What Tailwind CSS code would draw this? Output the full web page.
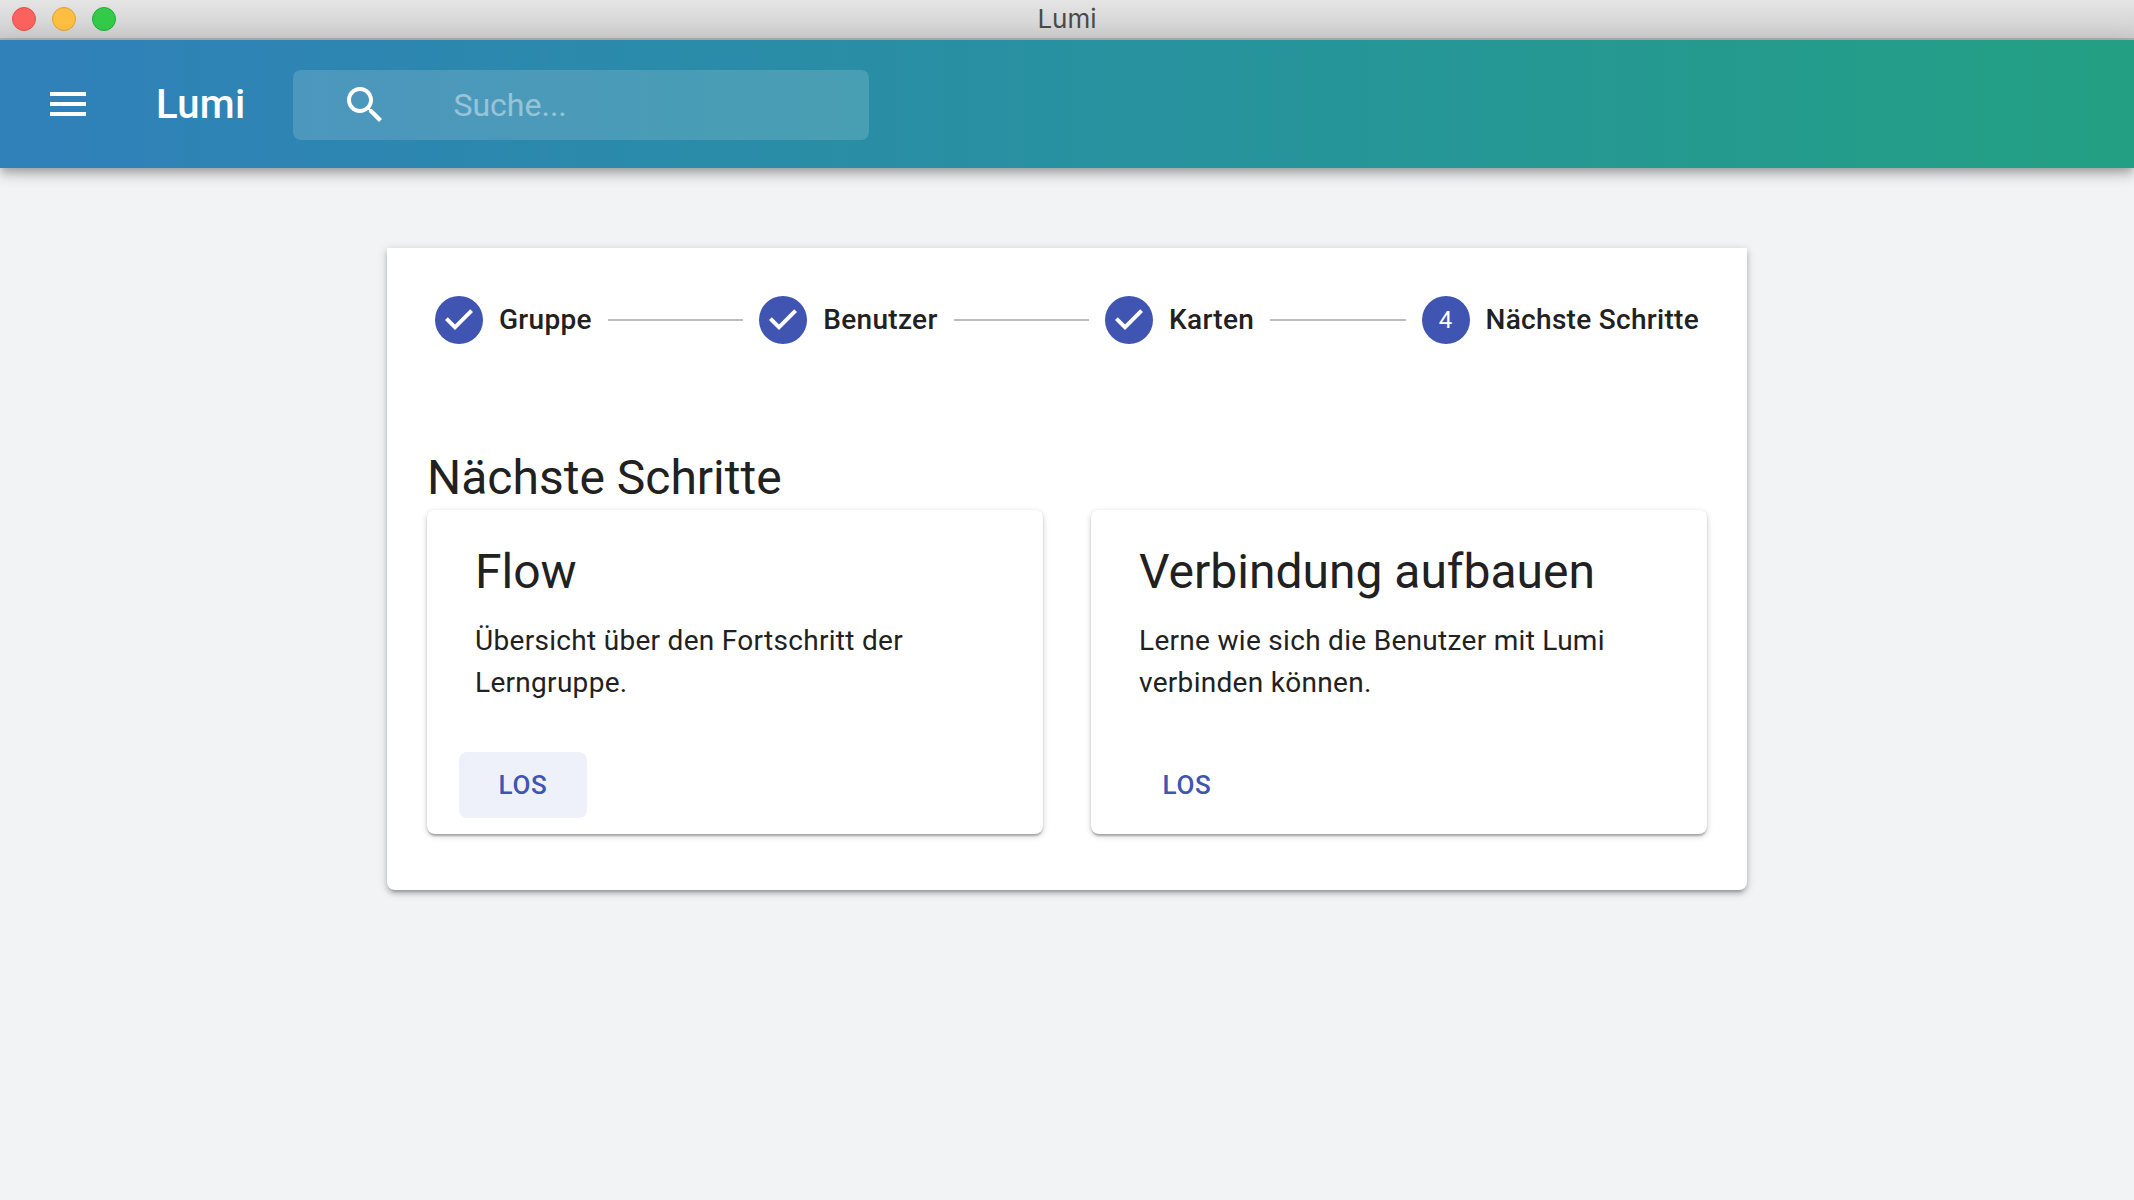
<!DOCTYPE html>
<html lang="de">
<head>
<meta charset="utf-8">
<title>Lumi</title>
<script src="https://cdn.jsdelivr.net/npm/@tailwindcss/browser@4"></script>
</head>
<body class="min-h-screen bg-[#f1f3f5] font-[Roboto,sans-serif] text-[#212121]">
  <div class="grid h-10 grid-cols-3 items-center border-b-2 border-[#b2b0b2] bg-linear-to-b from-[#e5e5e5] to-[#cecece] px-3">
    <div class="flex gap-4">
      <span class="size-6 rounded-full border border-[#e2504c] bg-[#fc625d]"></span>
      <span class="size-6 rounded-full border border-[#dfa03a] bg-[#fdbe41]"></span>
      <span class="size-6 rounded-full border border-[#24ab37] bg-[#34ca49]"></span>
    </div>
    <span class="text-center font-[Inter,sans-serif] text-[26px] leading-8 text-[#4a4a4a]">Lumi</span>
  </div>

  <header class="relative flex h-32 items-center bg-linear-to-r from-[#3080ba] to-[#23a083] pl-11 text-white shadow-[0_4px_8px_-2px_rgba(0,0,0,0.2),0_8px_10px_0_rgba(0,0,0,0.14),0_2px_20px_0_rgba(0,0,0,0.12)]">
    <button type="button" aria-label="Menü" class="size-12">
      <svg viewBox="0 0 24 24" class="size-12" fill="currentColor"><path d="M3 18h18v-2H3v2zm0-5h18v-2H3v2zm0-7v2h18V6H3z"/></svg>
    </button>
    <div class="flex items-center gap-12 pt-0.5 pl-16">
      <h1 class="text-[40px] leading-16 font-medium tracking-[0.0075em]">Lumi</h1>
      <label class="flex h-[70px] w-[576px] items-center rounded-lg bg-white/15 pl-12">
        <svg viewBox="0 0 24 24" class="size-12 shrink-0" fill="currentColor" aria-hidden="true"><path d="M15.5 14h-.79l-.28-.27C15.41 12.59 16 11.11 16 9.5 16 5.91 13.09 3 9.5 3S3 5.91 3 9.5 5.91 16 9.5 16c1.61 0 3.09-.59 4.23-1.57l.27.28v.79l5 4.99L20.49 19l-4.99-5zm-6 0C7.01 14 5 11.99 5 9.5S7.01 5 9.5 5 14 7.01 14 9.5 11.99 14 9.5 14z"/></svg>
        <input type="text" aria-label="Suche" placeholder="Suche..." class="ml-16 w-full min-w-0 bg-transparent text-[32px] leading-10 outline-none placeholder:text-white/42">
      </label>
    </div>
  </header>

  <main class="mx-auto mt-20 max-w-[1360px] rounded-b-lg bg-white pb-14 shadow-[0_2px_10px_0_rgba(0,0,0,0.2),0_4px_4px_0_rgba(0,0,0,0.14),0_6px_2px_-4px_rgba(0,0,0,0.12)]">
    <ol class="flex items-center gap-4 p-12 text-[28px] leading-12 font-medium tracking-[0.01071em]">
      <li class="flex items-center gap-4">
        <svg viewBox="0 0 24 24" class="size-12" aria-hidden="true"><circle cx="12" cy="12" r="12" fill="#4054b2"/><path fill="#fff" d="M10 17l-5-5 1.400-1.400 3.600 3.600 7.600-7.600L19 8l-9 9z"/></svg>
        <span>Gruppe</span>
      </li>
      <li role="presentation" class="h-[2px] flex-1 bg-[#bdbdbd]"></li>
      <li class="flex items-center gap-4">
        <svg viewBox="0 0 24 24" class="size-12" aria-hidden="true"><circle cx="12" cy="12" r="12" fill="#4054b2"/><path fill="#fff" d="M10 17l-5-5 1.400-1.400 3.600 3.600 7.600-7.600L19 8l-9 9z"/></svg>
        <span>Benutzer</span>
      </li>
      <li role="presentation" class="h-[2px] flex-1 bg-[#bdbdbd]"></li>
      <li class="flex items-center gap-4">
        <svg viewBox="0 0 24 24" class="size-12" aria-hidden="true"><circle cx="12" cy="12" r="12" fill="#4054b2"/><path fill="#fff" d="M10 17l-5-5 1.400-1.400 3.600 3.600 7.600-7.600L19 8l-9 9z"/></svg>
        <span>Karten</span>
      </li>
      <li role="presentation" class="h-[2px] flex-1 bg-[#bdbdbd]"></li>
      <li class="flex items-center gap-4" aria-current="step">
        <span class="flex size-12 items-center justify-center rounded-full bg-[#4054b2] text-2xl font-normal text-white">4</span>
        <span>Nächste Schritte</span>
      </li>
    </ol>

    <section class="px-10 pt-[54px]">
      <h2 class="text-[48px] leading-16">Nächste Schritte</h2>
      <div class="grid grid-cols-2 gap-12">
        <article class="rounded-lg pb-4 shadow-[0_2px_6px_0_rgba(0,0,0,0.2),0_2px_2px_0_rgba(0,0,0,0.14),0_4px_2px_-2px_rgba(0,0,0,0.12)]">
          <div class="px-12 pt-[30px]">
            <h3 class="text-[48px] leading-16">Flow</h3>
            <p class="mt-4 text-[28px] leading-[42px] tracking-[0.01071em]">Übersicht über den Fortschritt der Lerngruppe.</p>
          </div>
          <button type="button" class="mt-12 ml-8 h-[66px] w-32 rounded-lg bg-[#eef1f9] text-[26px] font-medium tracking-[0.02857em] text-[#4054b2]">LOS</button>
        </article>
        <article class="rounded-lg pb-4 shadow-[0_2px_6px_0_rgba(0,0,0,0.2),0_2px_2px_0_rgba(0,0,0,0.14),0_4px_2px_-2px_rgba(0,0,0,0.12)]">
          <div class="px-12 pt-[30px]">
            <h3 class="text-[48px] leading-16">Verbindung aufbauen</h3>
            <p class="mt-4 text-[28px] leading-[42px] tracking-[0.01071em]">Lerne wie sich die Benutzer mit Lumi verbinden können.</p>
          </div>
          <button type="button" class="mt-12 ml-8 h-[66px] w-32 rounded-lg text-[26px] font-medium tracking-[0.02857em] text-[#4054b2]">LOS</button>
        </article>
      </div>
    </section>
  </main>
</body>
</html>
